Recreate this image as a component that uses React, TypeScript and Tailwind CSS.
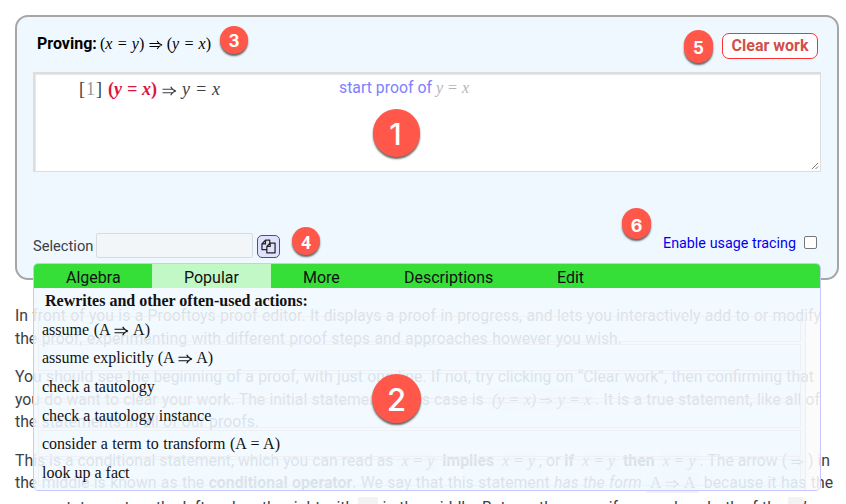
import React from "react";

type BoxProps = { w: string; children: React.ReactNode; cls?: string };

function Fit({ w, children, cls = "" }: BoxProps) {
  return (
    <div className={`${w} ${cls} shrink-0 whitespace-nowrap [text-align-last:justify]`}>{children}</div>
  );
}

function Math({ children, cls = "" }: { children: React.ReactNode; cls?: string }) {
  return <span className={`font-['Liberation_Serif',serif] italic ${cls}`}>{children}</span>;
}

function Code({ children, plain = false }: { children: React.ReactNode; plain?: boolean }) {
  return (
    <span className={`rounded-[2px] bg-[#f3f3f3] px-1 py-[2px] font-['Liberation_Serif',serif] text-[16px] leading-[16px] ${plain ? "" : "italic"}`}>
      {children}
    </span>
  );
}

function Arrow({ cls = "w-[15px]" }: { cls?: string }) {
  return (
    <svg viewBox="0 0 15 10" className={`${cls} inline-block h-[10px] align-[-1px]`} fill="none" stroke="currentColor" strokeWidth="1.1">
      <path d="M0.5 3.3H11.4M0.5 6.7H11.4M8.7 0.8C9.8 3 11.5 4.5 14 5C11.5 5.5 9.8 7 8.7 9.2" />
    </svg>
  );
}

function Badge({ cls, children }: { cls: string; children: React.ReactNode }) {
  return (
    <div className={`absolute flex items-center justify-center rounded-full bg-[#ff584b] text-white shadow-[0_2px_2px_rgba(0,0,0,0.6)] ${cls}`}>
      {children}
    </div>
  );
}

function Tab({ w, label, textW, pad, active = false }: { w: string; label: string; textW: string; pad: string; active?: boolean }) {
  return (
    <div className={`h-full shrink-0 ${w} ${pad} ${active ? "bg-[#c2f7c6]" : ""}`}>
      <Fit w={textW}>{label}</Fit>
    </div>
  );
}

function Row({ children }: { children: React.ReactNode }) {
  return (
    <div className="mb-[2.2px] h-[26.5px] border border-[#ecedee]/70 pl-[3px] text-[16px] leading-[25px]">{children}</div>
  );
}

export default function App() {
  return (
    <div className="relative h-[504px] w-[846px] overflow-hidden bg-white pl-[15px] pt-[15px] font-['Roboto',sans-serif] text-[15.8px] text-[#3b4045]">
      <section className="flex h-[265px] w-[824px] flex-col rounded-[13px] border-2 border-[#a6a6a6] bg-[#f0f8ff] pl-[16px] pr-[16px]">
        <header className="flex h-[55px] items-start justify-between pl-[4px] pr-[3px] pt-[16px]">
          <div className="flex items-baseline gap-[3px] pt-[1px] text-black">
            <Fit w="w-[60px]" cls="text-[16px] font-bold leading-[20px]">Proving:</Fit>
            <Fit w="w-[111px]" cls="text-[16px] leading-[20px] [word-spacing:-2px]">
              <Math><span className="not-italic">(</span>x = y<span className="not-italic">)</span> <Arrow cls="w-[14px]" /> <span className="not-italic">(</span>y = x<span className="not-italic">)</span></Math>
            </Fit>
          </div>
          <button className="h-[26px] w-[96px] rounded-[7px] border border-[#ff3030] bg-white text-[16px] font-bold leading-[24px] text-[#d0504b]">Clear work</button>
        </header>

        <div className="relative flex h-[100px] w-[788px] items-start border border-t-2 border-l-2 border-[#dddddd] bg-white pl-[44px] pt-[4px] shadow-[inset_1px_1px_0_#e8e8e8]">
          <Fit w="w-[141px]" cls="text-[18px] leading-[22px] [word-spacing:-3px]">
            <span className="font-['Liberation_Serif',serif]"><span className="tracking-[1px]">[<span className="text-[#999]">1</span>]</span> <span className="font-bold text-[#dc143c]">(<i>y = x</i>)</span> <Arrow /> <i>y = x</i></span>
          </Fit>
          <div className="flex items-baseline gap-[4px] pl-[119px] leading-[19px]">
            <Fit w="w-[93px]" cls="text-[#8080ff]">start proof of</Fit>
            <Fit w="w-[33px]" cls="text-[16px] text-[#b4b4b4] [word-spacing:-2px]"><Math>y = x</Math></Fit>
          </div>
          <svg viewBox="0 0 9 9" className="absolute right-[1px] bottom-[1px] h-[8px] w-[8px]" stroke="#555" strokeWidth="0.9"><path d="M1 8L8 1M5 8L8 5" /></svg>
        </div>

        <div className="flex h-[86px] items-end justify-between pr-[4px]">
          <div className="flex items-center">
            <Fit w="w-[59px]" cls="pt-[1px] text-[14.7px]">Selection</Fit>
            <div className="ml-[4px] h-[25px] w-[157px] rounded-[2px] border border-[#d9dcdf] bg-[#f3f6f8]" />
            <button className="relative top-[1px] ml-[4px] flex h-[23px] w-[23px] items-center justify-center rounded-[5px] border border-[#555] bg-[#e0e0ff]">
              <svg viewBox="0 0 16 16" className="h-[15px] w-[15px] shrink-0" fill="none" stroke="#222" strokeWidth="1.3" strokeLinejoin="round">
                <path d="M6.2 11.3H1V5.2L4.8 1.3H9.3V4.5M4.8 1.3V5.2H1M6.2 8L9.8 4.3H15V14.7H6.2ZM9.8 4.3V8H6.2" />
              </svg>
            </button>
          </div>
          <label className="flex items-center gap-[8px] pb-[4px] text-[14.3px] text-[#0000ee]">
            <Fit w="w-[133px]">Enable usage tracing</Fit>
            <span className="relative -top-[1px] h-[13px] w-[13px] shrink-0 rounded-[2px] border border-[#777] bg-white" />
          </label>
        </div>
      </section>

      <main className="flex flex-col gap-[15.6px] pt-[24.9px] leading-[22.7px]">
        <div>
          <Fit w="w-[806px]">In front of you is a Prooftoys proof editor. It displays a proof in progress, and lets you interactively add to or modify</Fit>
          <Fit w="w-[607px]">the proof, experimenting with different proof steps and approaches however you wish.</Fit>
        </div>
        <div>
          <Fit w="w-[799px]">You should see the beginning of a proof, with just one line. If not, try clicking on “Clear work”, then confirming that</Fit>
          <Fit w="w-[805px]">you do want to clear your work. The initial statement in this case is <Code>(y = x) <Arrow cls="w-[13px]" /> y = x</Code>. It is a true statement, like all of</Fit>
          <Fit w="w-[244px]">the statements in all of our proofs.</Fit>
        </div>
        <div>
          <Fit w="w-[814px]">This is a conditional statement, which you can read as <Code>x = y</Code> <b>implies</b> <Code>x = y</Code>, or <b>if</b> <Code>x = y</Code> <b>then</b> <Code>x = y</Code>. The arrow (<Code><Arrow cls="w-[13px]" /></Code>) in</Fit>
          <Fit w="w-[818px]">the middle is known as the <b>conditional operator</b>. We say that this statement <i>has the form</i> <Code plain>A <Arrow /> A</Code> because it has the</Fit>
          <Fit w="w-[799px]" cls="pt-[2px]">same statement on the left and on the right with <Code><Arrow cls="w-[12px]" /></Code> in the middle. But see the same if you replace both of the <Code>x</Code>’s</Fit>
        </div>
      </main>

      <nav className="absolute top-[263px] left-[33px] h-[228px] w-[788px] overflow-hidden rounded-[5px] border border-[#c8c8ff] text-[#111]">
        <div className="flex h-[24px] bg-[#35df38] text-[16px] leading-[27px]">
          <Tab w="w-[118px]" pad="pl-[32px]" textW="w-[54px]" label="Algebra" />
          <Tab w="w-[119px]" pad="pl-[32px]" textW="w-[55px]" label="Popular" active />
          <Tab w="w-[101px]" pad="pl-[32px]" textW="w-[37px]" label="More" />
          <Tab w="w-[152px]" pad="pl-[32px]" textW="w-[89px]" label="Descriptions" />
          <Tab w="w-[120px]" pad="pl-[33px]" textW="w-[27px]" label="Edit" />
        </div>
        <div className="flex h-[202px] font-['Liberation_Serif',serif]">
          <div className="w-[771px] shrink-0 bg-[#f0f8ff]/88 pl-[4px] pr-[4px]">
            <Fit w="w-[262px]" cls="ml-[7px] h-[27.6px] text-[16px] font-bold leading-[26px]">Rewrites and other often-used actions:</Fit>
            <Row><Fit w="w-[108px]">assume (A <Arrow /> A)</Fit></Row>
            <Row><Fit w="w-[171px]">assume explicitly (A <Arrow /> A)</Fit></Row>
            <Row><Fit w="w-[112px]">check a tautology</Fit></Row>
            <Row><Fit w="w-[169px]">check a tautology instance</Fit></Row>
            <Row><Fit w="w-[238px]">consider a term to transform (A = A)</Fit></Row>
            <Row><Fit w="w-[87px]">look up a fact</Fit></Row>
          </div>
          <div className="flex grow flex-col">
            <div className="h-[24px] bg-[#f0f8ff]/88" />
            <div className="grow border-l border-[#eee] bg-[#fafafa]/88" />
          </div>
        </div>
      </nav>

      <Badge cls="left-[373px] top-[109px] h-[48px] w-[47px] pr-[2px] pt-[2px] font-['Inter',sans-serif] text-[30px] font-medium">1</Badge>
      <Badge cls="left-[372px] top-[374px] h-[49px] w-[49px] pt-[3px] font-['Inter',sans-serif] text-[31px] font-medium">2</Badge>
      <Badge cls="left-[220px] top-[26px] h-[28px] w-[28px] pt-[3px] font-['Inter',sans-serif] text-[17px] font-bold">3</Badge>
      <Badge cls="left-[292px] top-[227px] h-[28px] w-[28px] pt-[3px] font-['Open_Sans',sans-serif] text-[17px] font-bold">4</Badge>
      <Badge cls="left-[684px] top-[30px] h-[33px] w-[29px] pt-[4px] font-['Inter',sans-serif] text-[17px] font-bold">5</Badge>
      <Badge cls="left-[622px] top-[208px] h-[31px] w-[29px] pt-[3px] font-['Inter',sans-serif] text-[18px] font-bold">6</Badge>
    </div>
  );
}
